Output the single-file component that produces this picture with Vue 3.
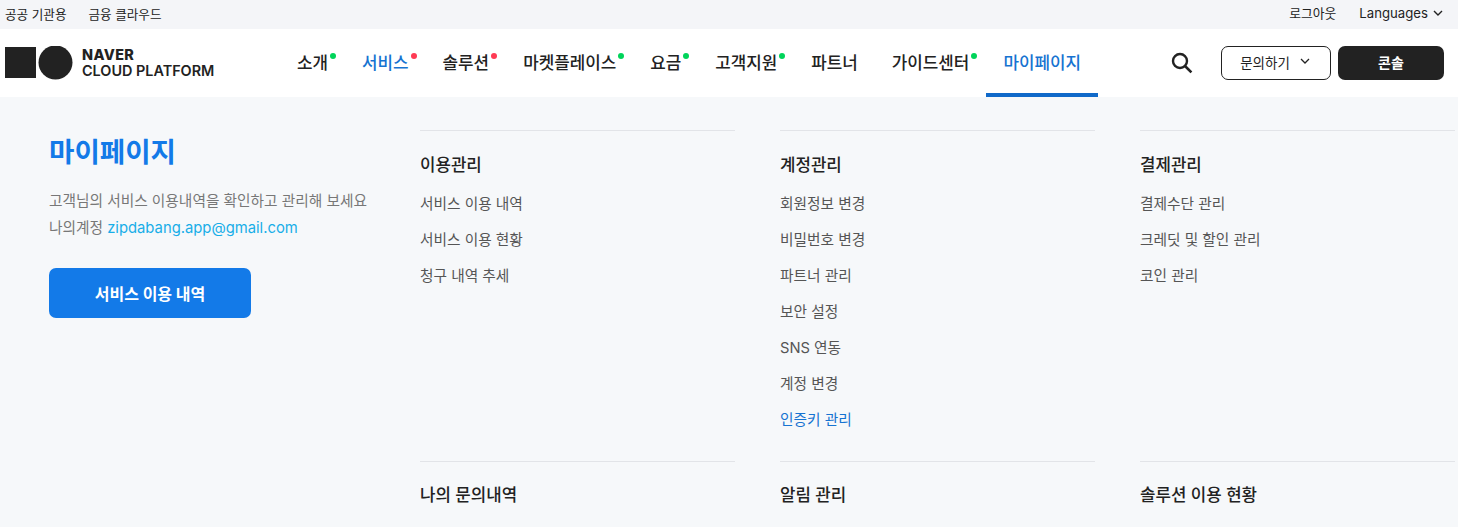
<script setup>
const navItems = [
  { label: '소개', dot: 'green' },
  { label: '서비스', dot: 'red', on: true },
  { label: '솔루션', dot: 'red' },
  { label: '마켓플레이스', dot: 'green' },
  { label: '요금', dot: 'green' },
  { label: '고객지원', dot: 'green' },
  { label: '파트너' },
  { label: '가이드센터', dot: 'green' },
  { label: '마이페이지', current: true },
]

const groups = [
  { title: '이용관리', links: ['서비스 이용 내역', '서비스 이용 현황', '청구 내역 추세'] },
  { title: '계정관리', links: ['회원정보 변경', '비밀번호 변경', '파트너 관리', '보안 설정', 'SNS 연동', '계정 변경', '인증키 관리'], active: '인증키 관리' },
  { title: '결제관리', links: ['결제수단 관리', '크레딧 및 할인 관리', '코인 관리'] },
  { title: '나의 문의내역', links: [] },
  { title: '알림 관리', links: [] },
  { title: '솔루션 이용 현황', links: [] },
]
</script>

<template>
  <div class="page">
    <div class="topbar">
      <div class="top-links">
        <a>공공 기관용</a>
        <a>금융 클라우드</a>
      </div>
      <div class="top-right">
        <a>로그아웃</a>
        <a class="lang">
          Languages
          <svg width="10" height="7" viewBox="0 0 10 7"><path d="M1 1l4 4 4-4" fill="none" stroke="#222" stroke-width="1.4" /></svg>
        </a>
      </div>
    </div>

    <header class="header">
      <div class="logo">
        <svg class="logo-mark" width="68" height="34" viewBox="0 0 68 34">
          <rect x="0" y="1" width="31" height="31" fill="#222" />
          <circle cx="50.5" cy="16.5" r="17" fill="#222" />
        </svg>
        <div class="logo-text">
          <span class="logo-top">NAVER</span>
          <span>CLOUD PLATFORM</span>
        </div>
      </div>

      <nav class="nav">
        <a
          v-for="item in navItems"
          :key="item.label"
          class="nav-item"
          :class="{ on: item.on, current: item.current }"
        >
          <span class="nav-label">
            {{ item.label }}
            <i v-if="item.dot" class="dot" :class="item.dot"></i>
          </span>
        </a>
      </nav>

      <div class="actions">
        <svg class="search" width="22" height="22" viewBox="0 0 22 22">
          <circle cx="9" cy="9" r="7" fill="none" stroke="#222" stroke-width="2.4" />
          <path d="M14 14l6.4 6.4" stroke="#222" stroke-width="2.6" fill="none" />
        </svg>
        <button class="btn-ask">
          문의하기
          <svg width="10" height="7" viewBox="0 0 10 7"><path d="M1 1l4 4 4-4" fill="none" stroke="#222" stroke-width="1.3" /></svg>
        </button>
        <button class="btn-console">콘솔</button>
      </div>
    </header>

    <main class="main">
      <section class="intro">
        <h1>마이페이지</h1>
        <p class="desc">고객님의 서비스 이용내역을 확인하고 관리해 보세요</p>
        <p class="desc">나의계정 <span class="mail">zipdabang.app@gmail.com</span></p>
        <button class="btn-primary">서비스 이용 내역</button>
      </section>

      <section class="menu">
        <div v-for="g in groups" :key="g.title" class="group">
          <h2>{{ g.title }}</h2>
          <ul>
            <li v-for="link in g.links" :key="link" :class="{ active: link === g.active }">{{ link }}</li>
          </ul>
        </div>
      </section>
    </main>
  </div>
</template>

<style>
html, body {
  margin: 0;
  background: #f6f8fa;
  overflow: hidden;
}
</style>

<style scoped>
.page {
  font-family: Inter, "Noto Sans CJK KR", sans-serif;
  color: #222;
  height: 527px;
  overflow: hidden;
  background: #f6f8fa;
}

.topbar {
  height: 29px;
  display: flex;
  justify-content: space-between;
  align-items: center;
  padding: 0 15px 2px 5px;
  box-sizing: border-box;
  font-size: 12.6px;
  background: #f4f5f8;
}
.top-links, .top-right {
  display: flex;
  gap: 22px;
}
.top-right {
  gap: 23px;
  font-size: 12.8px;
  line-height: 15px;
}
.lang {
  display: flex;
  align-items: center;
  gap: 5px;
  font-size: 13.2px;
  margin-top: -1px;
}

.header {
  height: 68px;
  background: #fff;
  display: flex;
  align-items: stretch;
}
.logo {
  width: 280px;
  padding-left: 5px;
  box-sizing: border-box;
  display: flex;
  align-items: center;
  gap: 9px;
}
.logo-mark {
  display: block;
}
.logo-text {
  display: flex;
  flex-direction: column;
  font-size: 14.4px;
  line-height: 16px;
  font-weight: 600;
}
.logo-top {
  font-weight: 800;
  letter-spacing: 0.4px;
}

.nav {
  display: flex;
}
.nav-item {
  padding: 0 17px;
  display: flex;
  align-items: center;
  font-size: 16.87px;
  font-weight: 500;
  border-bottom: 4px solid transparent;
}
.nav-label {
  position: relative;
}
.nav-item.on {
  color: #1673d1;
}
.nav-item.current {
  color: #1673d1;
  border-bottom-color: #1069c9;
}
.dot {
  position: absolute;
  right: -8px;
  top: 4px;
  width: 6px;
  height: 6px;
  border-radius: 50%;
}
.dot.green {
  background: #00d45a;
}
.dot.red {
  background: #ff3b54;
}

.actions {
  margin-left: auto;
  display: flex;
  align-items: center;
  padding-right: 14px;
}
.search {
  margin-right: 28px;
}
.btn-ask, .btn-console {
  height: 34px;
  border-radius: 7px;
  font-family: inherit;
  box-sizing: border-box;
  padding-bottom: 3px;
}
.btn-ask {
  width: 110px;
  padding-bottom: 4px;
  padding-right: 8px;
  background: #fff;
  border: 1px solid #222;
  color: #222;
  font-size: 13.5px;
  display: flex;
  align-items: center;
  justify-content: center;
  gap: 10px;
}
.btn-console {
  width: 106px;
  margin-left: 7px;
  background: #222;
  border: 0;
  color: #fff;
  font-size: 14px;
  font-weight: 700;
}

.main {
  display: flex;
}
.intro {
  width: 420px;
  padding: 33px 0 0 49px;
  box-sizing: border-box;
}
h1 {
  margin: 0 0 14px;
  font-size: 27.6px;
  line-height: 44px;
  font-weight: 700;
  color: #137ae8;
}
.desc {
  margin: 0;
  font-size: 14.7px;
  line-height: 27px;
  color: #777;
}
.mail {
  color: #18aee8;
  font-size: 14.8px;
}
.btn-primary {
  display: block;
  margin-top: 26px;
  width: 202px;
  height: 50px;
  background: #137ae8;
  color: #fff;
  border: 0;
  border-radius: 7px;
  font-family: inherit;
  font-size: 16px;
  font-weight: 700;
}

.menu {
  flex: 1;
  display: grid;
  grid-template-columns: 315px 315px 315px;
  column-gap: 45px;
  padding-top: 33px;
  align-content: start;
}
.group {
  border-top: 1px solid #e2e4e8;
  min-height: 330px;
}
.group:nth-child(n + 4) h2 {
  padding-top: 20px;
}
h2 {
  margin: 0;
  padding-top: 21px;
  font-size: 16.8px;
  line-height: 26px;
  font-weight: 500;
}
ul {
  list-style: none;
  margin: 8px 0 0;
  padding: 0;
}
li {
  font-size: 14.7px;
  line-height: 36px;
  color: #555;
}
li.active {
  color: #1673d1;
}
</style>
